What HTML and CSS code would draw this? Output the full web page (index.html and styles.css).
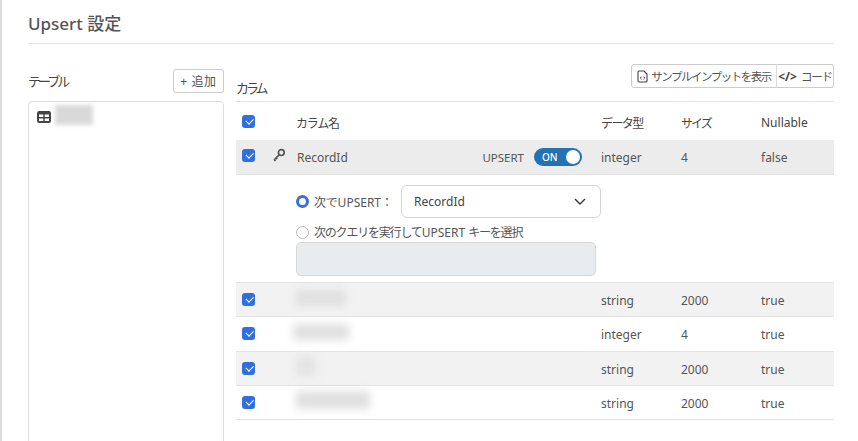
FILE: index.html
```html
<!DOCTYPE html>
<html lang="ja">
<head>
<meta charset="utf-8">
<title>Upsert 設定</title>
<link rel="stylesheet" href="styles.css">
</head>
<body>
<main class="panel">
  <h1 class="title">Upsert 設定</h1>
  <div class="columns">
    <section class="left">
      <div class="left-head">
        <h2 class="label">テーブル</h2>
        <button class="btn add">+ 追加</button>
      </div>
      <div class="table-list">
        <svg class="tbl-icon" width="14" height="12" viewBox="0 0 14 12"><rect width="14" height="12" rx="2.2" fill="#444"/><path d="M2 3.6H6.3V6H2zM7.7 3.6H12V6H7.7zM2 7.4H6.3V10H2zM7.7 7.4H12V10H7.7z" fill="#fff"/></svg>
        <span class="blur blur-name"></span>
      </div>
    </section>
    <section class="right">
      <div class="right-head">
        <h2 class="label label-col">カラム</h2>
        <div class="btn-group">
          <button class="btn seg">
            <svg width="11" height="13" viewBox="0 0 11 13"><path d="M1 2a1 1 0 0 1 1-1h5l3 3v7a1 1 0 0 1-1 1H2a1 1 0 0 1-1-1z" fill="none" stroke="#444" stroke-width="1.1"/><path d="M4.6 6.6 3.2 8l1.4 1.4M6.4 6.6 7.8 8 6.4 9.4" fill="none" stroke="#444" stroke-width="1"/></svg>
            <span class="seg-text">サンプルインプットを表示</span>
          </button>
          <button class="btn seg seg-code"><span class="code-mark">&lt;/&gt;</span> <span class="code-text">コード</span></button>
        </div>
      </div>
      <div class="grid">
        <div class="row head">
          <span class="c-check"><span class="check"></span></span>
          <span class="c-key"></span>
          <span class="c-name jp head-text">カラム名</span>
          <span class="c-type jp-mid head-text">データ型</span>
          <span class="c-size jp-tight head-text">サイズ</span>
          <span class="c-null head-text">Nullable</span>
        </div>
        <div class="row shade-dark">
          <span class="c-check raised"><span class="check"></span></span>
          <span class="c-key raised">
            <svg width="14" height="14" viewBox="0 0 14 14"><circle cx="9.3" cy="4.6" r="2.9" fill="none" stroke="#555" stroke-width="1.7"/><path d="M7.4 6.6 2 12M2.2 11.8l1.4 1.2M4 10l1.3 1.2" fill="none" stroke="#555" stroke-width="1.6"/></svg>
          </span>
          <span class="c-name name-split">RecordId
            <span class="upsert"><span class="upsert-label">UPSERT</span><span class="toggle"><span class="toggle-text">ON</span><span class="knob"></span></span></span>
          </span>
          <span class="c-type">integer</span>
          <span class="c-size">4</span>
          <span class="c-null">false</span>
        </div>
        <div class="detail">
          <div class="opt opt-first">
            <span class="radio on"></span>
            <span><span class="jp-soft">次で</span>UPSERT：</span>
            <div class="select"><span>RecordId</span>
              <svg width="12" height="7" viewBox="0 0 12 7"><path d="M1 1l5 5 5-5" fill="none" stroke="#333" stroke-width="1.4"/></svg>
            </div>
          </div>
          <div class="opt">
            <span class="radio"></span>
            <span><span class="jp">次のクエリを実行して</span>UPSERT <span class="jp">キーを選択</span></span>
          </div>
          <div class="query"></div>
        </div>
        <div class="row shade data">
          <span class="c-check"><span class="check"></span></span><span class="c-key"></span>
          <span class="c-name"><span class="blur b1"></span></span>
          <span class="c-type">string</span><span class="c-size">2000</span><span class="c-null">true</span>
        </div>
        <div class="row data">
          <span class="c-check"><span class="check"></span></span><span class="c-key"></span>
          <span class="c-name"><span class="blur b2"></span></span>
          <span class="c-type">integer</span><span class="c-size">4</span><span class="c-null">true</span>
        </div>
        <div class="row shade data">
          <span class="c-check"><span class="check"></span></span><span class="c-key"></span>
          <span class="c-name"><span class="blur b3"></span></span>
          <span class="c-type">string</span><span class="c-size">2000</span><span class="c-null">true</span>
        </div>
        <div class="row data">
          <span class="c-check"><span class="check"></span></span><span class="c-key"></span>
          <span class="c-name"><span class="blur b4"></span></span>
          <span class="c-type">string</span><span class="c-size">2000</span><span class="c-null">true</span>
        </div>
      </div>
    </section>
  </div>
</main>
</body>
</html>
```
FILE: styles.css
```css
* { box-sizing: border-box; }
html, body { margin: 0; height: 100%; overflow: hidden; }
body {
  background: #fff;
  color: #555;
  font-family: "Noto Sans", "Noto Sans CJK JP", sans-serif;
  font-size: 12px;
  border-left: 2px solid #dcdcdc;
}
.panel { padding: 0 24px 0 26px; height: 441px; overflow: hidden; }
.title {
  margin: 0;
  height: 44px;
  padding-top: 12px;
  border-bottom: 1px solid #e6e6e6;
  font-size: 17px;
  line-height: 24px;
  font-weight: 500;
  color: #555;
}
.columns { display: flex; gap: 12px; padding-top: 25px; align-items: flex-start; }
.left { width: 196px; flex: none; }
.right { flex: 1; min-width: 0; padding-top: 7px; margin-top: -7px; }
.left-head { display: flex; justify-content: space-between; align-items: center; height: 24px; margin-bottom: 8px; }
.label { margin: 0; font-size: 13px; font-weight: 400; color: #444; line-height: 18px; letter-spacing: -3px; }
.btn {
  font: inherit;
  color: #555;
  background: #fff;
  border: 1px solid #ccc;
  border-radius: 3px;
  padding: 0;
  white-space: nowrap;
}
.add { width: 51px; height: 24px; font-size: 12px; letter-spacing: 0.6px; }
.table-list {
  height: 400px;
  border: 1px solid #ddd;
  border-radius: 4px;
  padding: 3px 8px;
  display: flex;
  align-items: flex-start;
  gap: 4px;
}
.tbl-icon { margin-top: 6px; }
.blur { display: inline-block; background: #d4d4d4; filter: blur(3px); }
.blur-name { width: 38px; height: 20px; background: #d9d9d9; filter: blur(2px); }
.right-head { display: flex; justify-content: space-between; align-items: flex-end; height: 33px; padding-bottom: 6px; }
.label-col { line-height: 16px; margin-bottom: 0; }
.btn-group { display: flex; margin-bottom: 8px; }
.seg {
  height: 24px;
  width: 146px;
  font-size: 11.5px;
  display: flex;
  align-items: center;
  justify-content: center;
  gap: 3px;
  border-radius: 3px 0 0 3px;
}
.seg-text { letter-spacing: -1.5px; }
.seg-code { width: 58px; border-left: 1px solid #ddd; border-radius: 0 3px 3px 0; gap: 4px; margin-left: -1px; }
.code-mark { font-weight: 700; color: #444; font-size: 12px; }
.code-text { letter-spacing: -1.2px; }
.grid { border-top: 1px solid #e3e3e3; margin-top: -1px; }
.row {
  display: flex;
  align-items: center;
  height: 34.25px;
  border-bottom: 1px solid #e3e3e3;
  font-size: 12px;
  color: #555;
}
.head { height: 38px; border-bottom: 0; font-weight: 400; color: #444; }
.head-text { padding-top: 3px; }
.jp { letter-spacing: -1.2px; }
.jp-soft { letter-spacing: -0.2px; }
.jp-mid { letter-spacing: -1.6px; }
.jp-tight { letter-spacing: -2px; }
.shade { background: #f2f2f2; }
.shade-dark { background: #ececec; height: 35px; }
.data .c-type, .data .c-size, .data .c-null { padding-top: 2px; }
.c-check { width: 36px; padding-left: 6px; display: flex; flex: none; }
.c-key { width: 24px; flex: none; display: flex; }
.raised { margin-bottom: 4px; }
.c-name { width: 305px; flex: none; padding-right: 19px; }
.name-split { display: flex; justify-content: space-between; align-items: center; padding-left: 1px; }
.c-type { width: 80px; flex: none; }
.c-size { width: 80px; flex: none; }
.c-null { flex: 1; }
.check {
  width: 13px;
  height: 13px;
  border-radius: 3px;
  background: #2f6fdf;
  position: relative;
  display: block;
}
.check::after {
  content: "";
  position: absolute;
  left: 3.5px;
  top: 3px;
  width: 6px;
  height: 3.5px;
  border-left: 1.7px solid #fff;
  border-bottom: 1.7px solid #fff;
  transform: rotate(-45deg);
}
.upsert { display: flex; align-items: center; gap: 10px; font-size: 11.5px; }
.toggle {
  width: 48px;
  height: 18px;
  border-radius: 9px;
  background: #2272b4;
  color: #fff;
  display: flex;
  align-items: center;
  justify-content: space-between;
  padding: 0 2px 0 8px;
  font-size: 10px;
  font-weight: 500;
}
.knob { width: 14px; height: 14px; border-radius: 50%; background: #fff; }
.detail {
  height: 108px;
  padding: 10px 0 0 60px;
  border-bottom: 1px solid #e3e3e3;
  color: #555;
}
.opt { display: flex; align-items: center; gap: 5px; height: 18px; }
.opt-first { height: 33px; margin-bottom: 5px; }
.radio {
  width: 13px;
  height: 13px;
  border-radius: 50%;
  border: 1px solid #bbb;
  background: #fff;
  flex: none;
}
.radio.on { border: 3.5px solid #3b6fd8; }
.select {
  width: 200px;
  height: 33px;
  margin-left: 3px;
  border: 1px solid #d5d5d5;
  border-radius: 6px;
  display: flex;
  align-items: center;
  justify-content: space-between;
  padding: 0 14px 0 12px;
  color: #444;
}
.query {
  width: 300px;
  height: 34px;
  margin-top: 1px;
  background: #e9ecef;
  border: 1px solid #d5d8da;
  border-radius: 5px;
}
.b1 { width: 50px; height: 16px; background: #e0e0e0; filter: blur(4px); }
.b2 { width: 56px; height: 16px; background: #e0e0e0; filter: blur(4px); margin-left: -3px; }
.b3 { width: 20px; height: 20px; background: #e4e4e4; filter: blur(4px); }
.b4 { width: 74px; height: 18px; background: #e0e0e0; filter: blur(4px); }
```
